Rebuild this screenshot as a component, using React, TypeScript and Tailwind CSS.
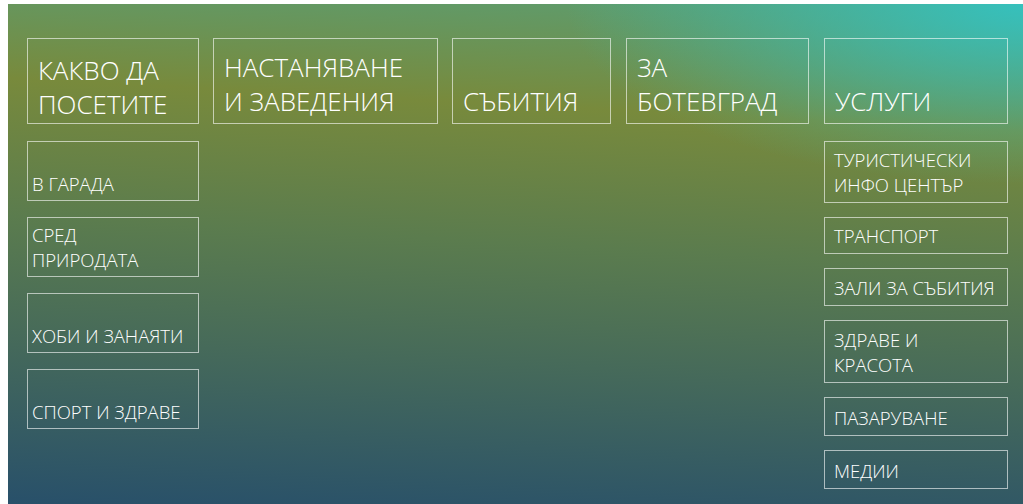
import React from "react";

type Tile = { label: string[]; h: string };

const visit: Tile[] = [
  { label: ["В ГАРАДА"], h: "h-[60px]" },
  { label: ["СРЕД", "ПРИРОДАТА"], h: "h-[60px]" },
  { label: ["ХОБИ И ЗАНАЯТИ"], h: "h-[60px]" },
  { label: ["СПОРТ И ЗДРАВЕ"], h: "h-[60px]" },
];

const services: Tile[] = [
  { label: ["ТУРИСТИЧЕСКИ", "ИНФО ЦЕНТЪР"], h: "h-[62px]" },
  { label: ["ТРАНСПОРТ"], h: "h-[37px]" },
  { label: ["ЗАЛИ ЗА СЪБИТИЯ"], h: "h-[38px]" },
  { label: ["ЗДРАВЕ И", "КРАСОТА"], h: "h-[63px]" },
  { label: ["ПАЗАРУВАНЕ"], h: "h-[39px]" },
  { label: ["МЕДИИ"], h: "h-[39px]" },
];

function MainTile({ lines, width, pad = "pb-[5px]" }: { lines: string[]; width: string; pad?: string }) {
  return (
    <a
      href="#"
      className={`${width} h-[86px] shrink-0 border border-white/60 flex flex-col justify-end pl-[10px] ${pad} text-[26px] leading-[34px] font-light text-white hover:bg-white/10`}
    >
      {lines.map((l) => (
        <span key={l} className="whitespace-nowrap">{l}</span>
      ))}
    </a>
  );
}

function SubTile({ tile, pb }: { tile: Tile; pb: string }) {
  return (
    <a
      href="#"
      className={`${tile.h} border border-white/60 flex flex-col justify-end ${pb} text-[18.5px] font-light leading-[25px] text-white hover:bg-white/10`}
    >
      {tile.label.map((l) => (
        <span key={l} className="whitespace-nowrap">{l}</span>
      ))}
    </a>
  );
}

export default function App() {
  return (
    <div className="w-[1023px] h-[504px] bg-white pl-2 pt-1 overflow-hidden" style={{ fontFamily: '"Open Sans", "Noto Sans", sans-serif' }}>
      <div className="relative h-[500px] w-full bg-[radial-gradient(ellipse_45%_36%_at_100%_0%,rgba(52,194,192,0.95),rgba(52,194,192,0)_100%),linear-gradient(183deg,#5b9e73_0%,#788a3c_23%,#5b7c4e_48%,#466a5a_70%,#28506a_100%)]">
        <div className="flex items-start pl-[19px] pt-[34px]">
          {/* Left column: what to visit */}
          <div className="flex flex-col w-[172px] shrink-0">
            <MainTile lines={["КАКВО ДА", "ПОСЕТИТЕ"]} width="w-[172px]" pad="pb-[2px]" />
            <div className="flex flex-col gap-[16px] mt-[17px]">
              {visit.map((t) => (
                <SubTile key={t.label.join(" ")} tile={t} pb="pl-[4px] pb-[4px]" />
              ))}
            </div>
          </div>

          <div className="ml-[14px]">
            <MainTile lines={["НАСТАНЯВАНЕ", "И ЗАВЕДЕНИЯ"]} width="w-[225px]" />
          </div>
          <div className="ml-[14px]">
            <MainTile lines={["СЪБИТИЯ"]} width="w-[159px]" />
          </div>
          <div className="ml-[15px]">
            <MainTile lines={["ЗА", "БОТЕВГРАД"]} width="w-[183px]" />
          </div>

          {/* Right column: services */}
          <div className="flex flex-col w-[184px] shrink-0 ml-[15px]">
            <MainTile lines={["УСЛУГИ"]} width="w-[184px]" />
            <div className="flex flex-col gap-[14px] mt-[17px]">
              {services.map((t) => (
                <SubTile key={t.label.join(" ")} tile={t} pb="pl-[9px] pb-[5px]" />
              ))}
            </div>
          </div>
        </div>
      </div>
    </div>
  );
}
